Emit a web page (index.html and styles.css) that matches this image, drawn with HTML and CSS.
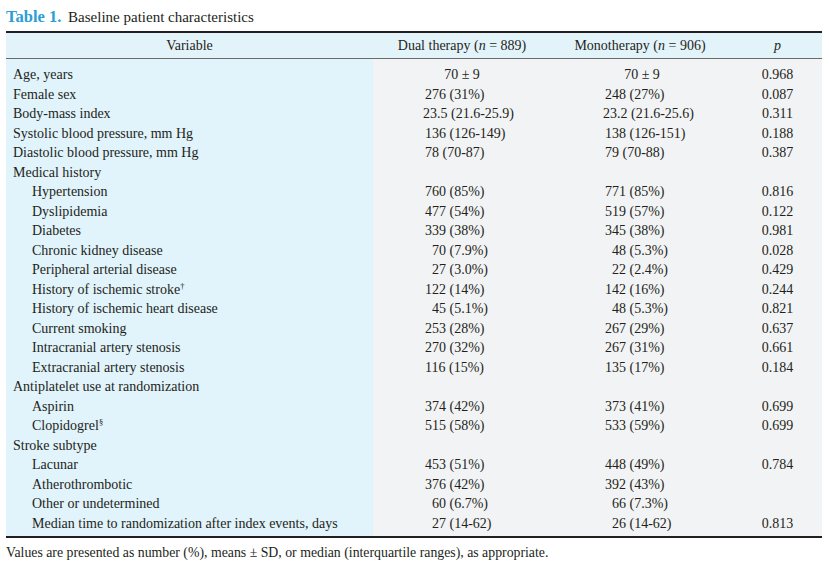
FILE: index.html
```html
<!DOCTYPE html>
<html>
<head>
<meta charset="utf-8">
<link rel="stylesheet" href="styles.css">
</head>
<body>
<div class="wrap">
  <div class="title"><span class="tnum">Table 1.</span> Baseline patient characteristics</div>
  <table class="tbl">
    <colgroup>
      <col class="c1"><col class="c2"><col class="c3"><col class="c4">
    </colgroup>
    <thead>
      <tr>
        <th>Variable</th>
        <th>Dual therapy (<i>n</i> = 889)</th>
        <th class="hm">Monotherapy (<i>n</i> = 906)</th>
        <th class="hp"><i>p</i></th>
      </tr>
    </thead>
    <tbody>
      <tr><td class="v">Age, years</td><td class="d ctr">70 ± 9</td><td class="m ctr">70 ± 9</td><td class="p">0.968</td></tr>
      <tr><td class="v">Female sex</td><td class="d">276 (31%)</td><td class="m">248 (27%)</td><td class="p">0.087</td></tr>
      <tr><td class="v">Body-mass index</td><td class="d dw">23.5 (21.6-25.9)</td><td class="m dw">23.2 (21.6-25.6)</td><td class="p">0.311</td></tr>
      <tr><td class="v">Systolic blood pressure, mm Hg</td><td class="d">136 (126-149)</td><td class="m">138 (126-151)</td><td class="p">0.188</td></tr>
      <tr><td class="v">Diastolic blood pressure, mm Hg</td><td class="d">78 (70-87)</td><td class="m">79 (70-88)</td><td class="p">0.387</td></tr>
      <tr><td class="v">Medical history</td><td class="d"></td><td class="m"></td><td class="p"></td></tr>
      <tr><td class="v in">Hypertension</td><td class="d">760 (85%)</td><td class="m">771 (85%)</td><td class="p">0.816</td></tr>
      <tr><td class="v in">Dyslipidemia</td><td class="d">477 (54%)</td><td class="m">519 (57%)</td><td class="p">0.122</td></tr>
      <tr><td class="v in">Diabetes</td><td class="d">339 (38%)</td><td class="m">345 (38%)</td><td class="p">0.981</td></tr>
      <tr><td class="v in">Chronic kidney disease</td><td class="d">&#8199;70 (7.9%)</td><td class="m">&#8199;48 (5.3%)</td><td class="p">0.028</td></tr>
      <tr><td class="v in">Peripheral arterial disease</td><td class="d">&#8199;27 (3.0%)</td><td class="m">&#8199;22 (2.4%)</td><td class="p">0.429</td></tr>
      <tr><td class="v in">History of ischemic stroke<sup>†</sup></td><td class="d">122 (14%)</td><td class="m">142 (16%)</td><td class="p">0.244</td></tr>
      <tr><td class="v in">History of ischemic heart disease</td><td class="d">&#8199;45 (5.1%)</td><td class="m">&#8199;48 (5.3%)</td><td class="p">0.821</td></tr>
      <tr><td class="v in">Current smoking</td><td class="d">253 (28%)</td><td class="m">267 (29%)</td><td class="p">0.637</td></tr>
      <tr><td class="v in">Intracranial artery stenosis</td><td class="d">270 (32%)</td><td class="m">267 (31%)</td><td class="p">0.661</td></tr>
      <tr><td class="v in">Extracranial artery stenosis</td><td class="d">116 (15%)</td><td class="m">135 (17%)</td><td class="p">0.184</td></tr>
      <tr><td class="v">Antiplatelet use at randomization</td><td class="d"></td><td class="m"></td><td class="p"></td></tr>
      <tr><td class="v in">Aspirin</td><td class="d">374 (42%)</td><td class="m">373 (41%)</td><td class="p">0.699</td></tr>
      <tr><td class="v in">Clopidogrel<sup>§</sup></td><td class="d">515 (58%)</td><td class="m">533 (59%)</td><td class="p">0.699</td></tr>
      <tr><td class="v">Stroke subtype</td><td class="d"></td><td class="m"></td><td class="p"></td></tr>
      <tr><td class="v in">Lacunar</td><td class="d">453 (51%)</td><td class="m">448 (49%)</td><td class="p">0.784</td></tr>
      <tr><td class="v in">Atherothrombotic</td><td class="d">376 (42%)</td><td class="m">392 (43%)</td><td class="p"></td></tr>
      <tr><td class="v in">Other or undetermined</td><td class="d">&#8199;60 (6.7%)</td><td class="m">&#8199;66 (7.3%)</td><td class="p"></td></tr>
      <tr><td class="v in">Median time to randomization after index events, days</td><td class="d">&#8199;27 (14-62)</td><td class="m">&#8199;26 (14-62)</td><td class="p">0.813</td></tr>
    </tbody>
  </table>
  <div class="note">Values are presented as number (%), means ± SD, or median (interquartile ranges), as appropriate.</div>
</div>
</body>
</html>
```
FILE: styles.css
```css
html, body {
  margin: 0;
  padding: 0;
  background: #ffffff;
}
body {
  font-family: "Liberation Serif", "Times New Roman", serif;
  color: #231f20;
}
.wrap {
  padding: 8px 7px 0 6px;
}
.title {
  font-size: 15px;
  line-height: 18px;
  height: 23px;
}
.tnum {
  color: #2a9ed6;
  font-weight: bold;
  font-size: 16.5px;
  margin-right: 3px;
}
.tbl {
  width: 816px;
  border-collapse: collapse;
  table-layout: fixed;
  font-size: 14px;
  border-top: 2px solid #231f20;
  border-bottom: 2px solid #231f20;
}
.c1 { width: 367px; }
.c2 { width: 178px; }
.c3 { width: 194px; }
.c4 { width: 77px; }
.tbl th {
  background: #e3f3fa;
  font-weight: normal;
  height: 25px;
  padding: 0;
  text-align: center;
  border-bottom: 1px solid #6b6b6b;
  line-height: 25px;
}
.tbl th.hm { padding-right: 16px; }
.tbl th.hp { padding-right: 12px; }
.tbl td {
  padding: 0;
  height: 19.5px;
  line-height: 19.5px;
  white-space: nowrap;
  background: #f2f3f4;
}
.tbl tbody tr:first-child td { padding-top: 6px; }
.tbl tbody tr:last-child td { padding-bottom: 3px; }
.tbl td.v {
  background: #e1f3fb;
  padding-left: 7px;
}
.tbl td.v.in { padding-left: 26px; }
.tbl td.d { padding-left: 52px; }
.tbl td.dw { padding-left: 50px; }
.tbl td.m { padding-left: 54px; }
.tbl td.m.dw { padding-left: 52px; }
.tbl td.d.ctr { padding-left: 0; padding-right: 0; text-align: center; }
.tbl td.m.ctr { padding-left: 0; padding-right: 12px; text-align: center; }
.tbl td.p {
  text-align: center;
  padding-right: 12px;
}
sup {
  font-size: 8.5px;
  line-height: 0;
  vertical-align: 5px;
}
.note {
  font-size: 13.8px;
  margin-top: 7px;
  line-height: 16px;
}
```
